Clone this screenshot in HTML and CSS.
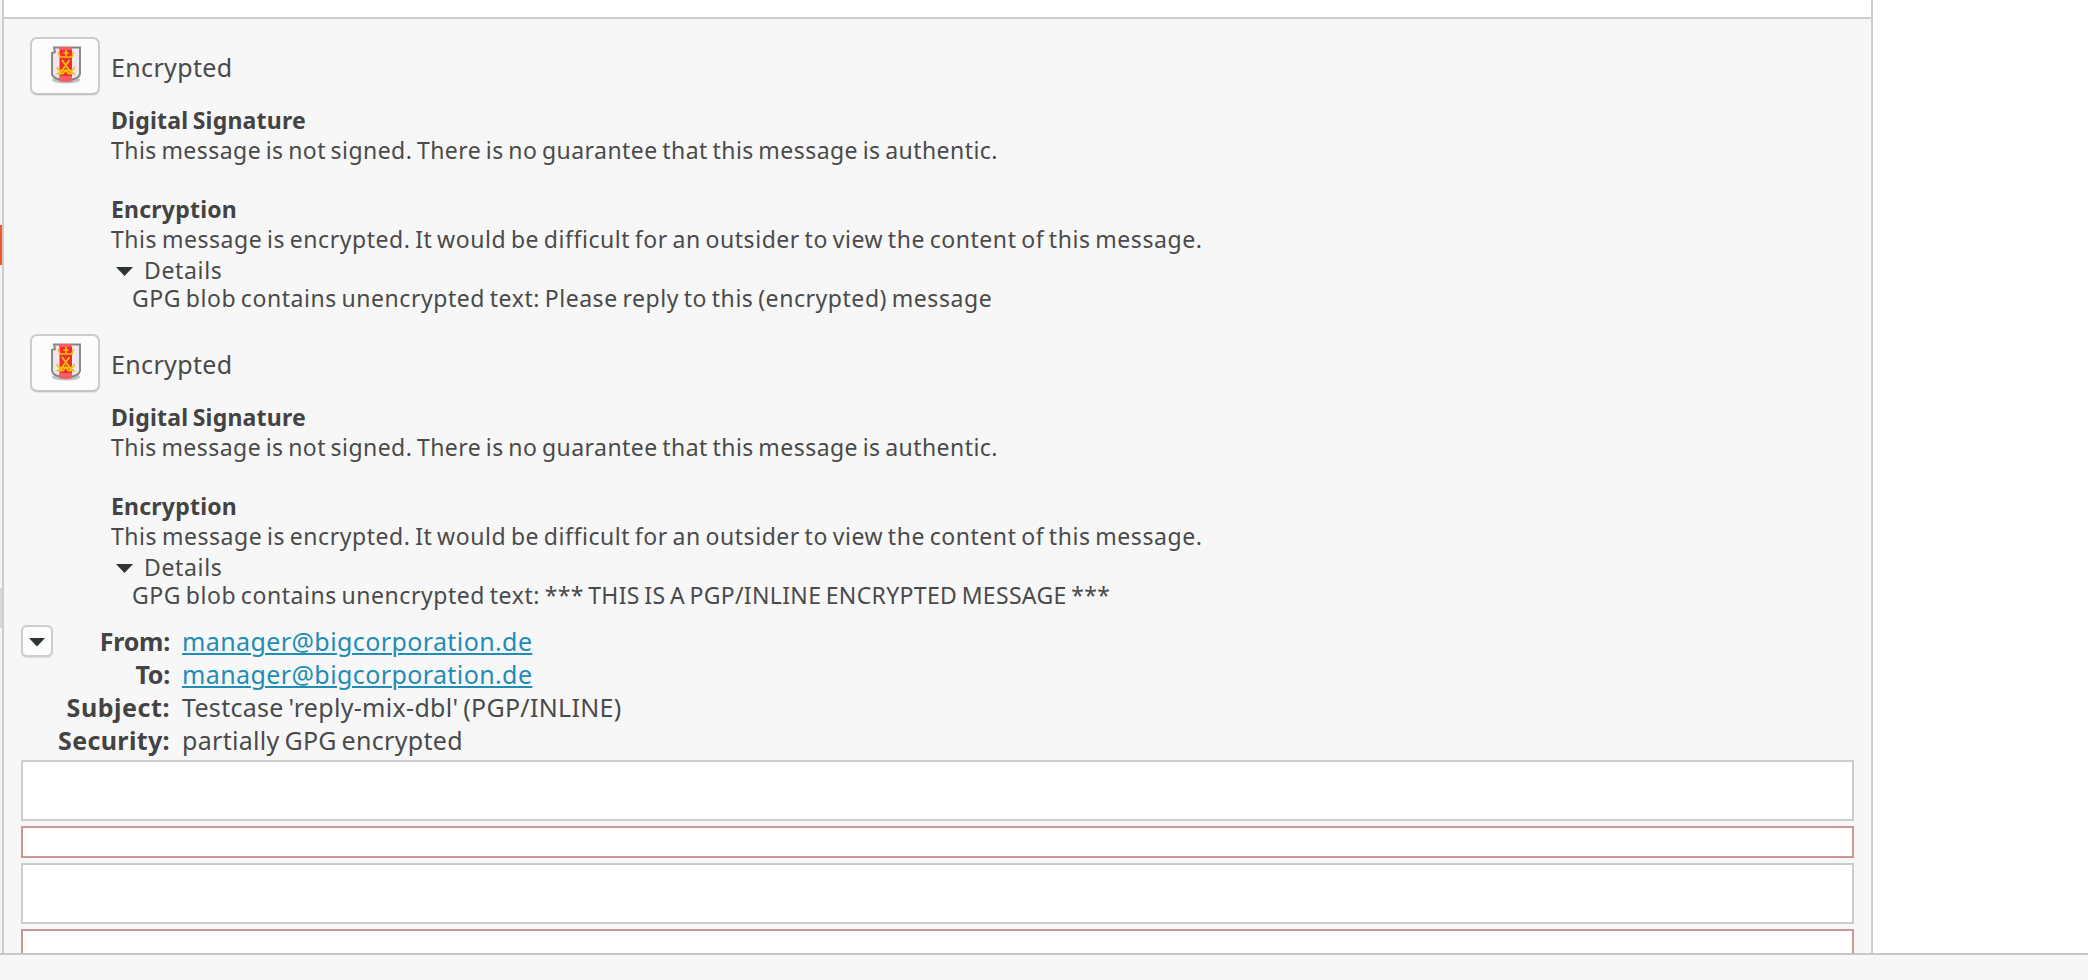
FILE: index.html
```html
<!DOCTYPE html>
<html lang="en">
<head>
<meta charset="utf-8">
<title>Message view</title>
<link rel="stylesheet" href="styles.css">
</head>
<body>
<svg class="defs" width="0" height="0" aria-hidden="true">
  <defs>
    <symbol id="shield" viewBox="0 0 34 42">
      <ellipse cx="18" cy="35" rx="14" ry="3.500" fill="#aaa" opacity=".7"/>
      <path d="M6 2.500H32V29Q31 34.500 18 35.500Q5 34.500 4 29V8L7 7Z" fill="#efe6f0" stroke="#858585" stroke-width="1.900"/>
      <path d="M11.500 2H24V36Q18 37 11.500 36Z" fill="#f42a2d"/>
      <path d="M11.500 2H24V5H11.500ZM11.500 31H24V36Q18 37 11.500 36Z" fill="#fb5c60"/>
      <path d="M10 7L12 12H24L25.500 7M18 5V11M15.500 8H20.500" fill="none" stroke="#f0c40c" stroke-width="1.700"/>
      <path d="M14 15L21.500 25.500M21.500 15L14 25.500M9 22Q10 26 14 26L10 28.500H15L17.800 25L20.500 28.500H25.500L21.500 26Q25.500 26 26.500 22" fill="none" stroke="#f0c40c" stroke-width="1.800"/>
    </symbol>
  </defs>
</svg>
<main class="workspace">
  <aside class="edge"><span class="edge-accent"></span><span class="edge-thumb"></span></aside>
  <section class="panel">
    <div class="top-strip"></div>
    <div class="content">
      <article class="card">
        <button class="seal" aria-label="Encrypted"><svg width="34" height="42"><use href="#shield"/></svg></button>
        <div class="info">
          <h2 class="title">Encrypted</h2>
          <p class="line strong">Digital Signature</p>
          <p class="line signed">This message is not signed. There is no guarantee that this message is authentic.</p>
          <p class="line strong second">Encryption</p>
          <p class="line">This message is encrypted. It would be difficult for an outsider to view the content of this message.</p>
          <p class="line details"><i class="arrow"></i>Details</p>
          <p class="line blob">GPG blob contains unencrypted text: Please reply to this (encrypted) message</p>
        </div>
      </article>
      <article class="card">
        <button class="seal" aria-label="Encrypted"><svg width="34" height="42"><use href="#shield"/></svg></button>
        <div class="info">
          <h2 class="title">Encrypted</h2>
          <p class="line strong">Digital Signature</p>
          <p class="line signed">This message is not signed. There is no guarantee that this message is authentic.</p>
          <p class="line strong second">Encryption</p>
          <p class="line">This message is encrypted. It would be difficult for an outsider to view the content of this message.</p>
          <p class="line details"><i class="arrow"></i>Details</p>
          <p class="line blob">GPG blob contains unencrypted text: <span class="caps">*** THIS IS A PGP/INLINE ENCRYPTED MESSAGE ***</span></p>
        </div>
      </article>
      <div class="headers">
        <button class="toggle" aria-label="Collapse headers"><i class="arrow"></i></button>
        <dl class="fields">
          <dt class="from">From:</dt><dd><a class="mail">manager@bigcorporation.de</a></dd>
          <dt class="to">To:</dt><dd><a class="mail">manager@bigcorporation.de</a></dd>
          <dt class="subject">Subject:</dt><dd>Testcase 'reply-mix-dbl' (PGP/INLINE)</dd>
          <dt class="security">Security:</dt><dd>partially GPG encrypted</dd>
        </dl>
      </div>
      <div class="parts">
        <div class="part"></div>
        <div class="part alert"></div>
        <div class="part"></div>
        <div class="part alert"></div>
      </div>
    </div>
  </section>
</main>
<footer class="status"></footer>
</body>
</html>
```
FILE: styles.css
```css
* { box-sizing: border-box; }
body {
  margin: 0;
  height: 980px;
  overflow: hidden;
  display: flex;
  flex-direction: column;
  background: #fff;
  color: #4a4a4a;
  font-family: "Noto Sans", sans-serif;
}
.defs { position: absolute; }
h2, p, dl, dd { margin: 0; font-weight: 400; }
button { padding: 0; font: inherit; }
.workspace { display: flex; height: 953px; }
.edge { width: 2px; display: flex; flex-direction: column; background: #f4f4f4; }
.edge-accent { height: 40px; margin-top: 225px; background: #f4582a; }
.edge-thumb { height: 40px; margin-top: 323px; background: #d8d8d8; }
.panel {
  width: 1871px;
  display: flex;
  flex-direction: column;
  overflow: hidden;
  border-left: 2px solid #cdcdcd;
  border-right: 2px solid #cdcdcd;
  background: #f7f7f7;
}
.top-strip { flex: none; height: 19px; background: #fff; border-bottom: 2px solid #cdcdcd; }
.content { padding: 18px 17px 0 17px; }
.card { display: flex; gap: 11px; height: 276px; margin: 0 0 21px 9px; }
.seal {
  flex: none;
  width: 70px;
  height: 58px;
  display: flex;
  align-items: center;
  justify-content: center;
  border: 2px solid #cdcdcd;
  border-bottom-color: #c4c4c4;
  border-radius: 7px;
  background: #fcfcfc;
  box-shadow: 0 1px 1px #e4e4e4;
}
.title { height: 68px; font-size: 25px; line-height: 60px; letter-spacing: .35px; white-space: nowrap; }
.line { font-size: 23px; line-height: 30px; letter-spacing: .55px; word-spacing: -1.8px; white-space: nowrap; }
.signed { letter-spacing: .45px; }
.strong { font-weight: 700; letter-spacing: .22px; color: #434343; }
.second { margin-top: 29px; }
.details { display: flex; align-items: center; gap: 11px; padding-left: 5px; margin-top: 1px; letter-spacing: .65px; }
.arrow {
  width: 17px;
  height: 9px;
  background: #2e3436;
  clip-path: polygon(0 0, 100% 0, 50% 100%);
}
.details .arrow { margin-top: 3px; }
.blob { padding-left: 21px; line-height: 27px; }
.caps { letter-spacing: .33px; }
.headers { display: flex; margin-top: -6px; }
.toggle {
  width: 32px;
  height: 32px;
  display: flex;
  align-items: center;
  justify-content: center;
  border: 2px solid #cdcdcd;
  border-radius: 6px;
  background: #fcfcfc;
  box-shadow: 0 1px 1px #ddd;
}
.toggle .arrow { margin-top: 2px; }
.fields {
  display: grid;
  grid-template-columns: 117px auto;
  grid-auto-rows: 33px;
  column-gap: 12px;
  font-size: 25px;
  line-height: 33px;
  letter-spacing: .3px;
  word-spacing: -2px;
  white-space: nowrap;
}
dt { font-weight: 700; color: #434343; text-align: right; }
.from, .to { letter-spacing: -.25px; }
.subject { letter-spacing: .55px; }
.security { letter-spacing: .37px; }
.mail { letter-spacing: .4px; }
a { color: #1f8db5; text-decoration: underline; text-decoration-thickness: 2px; text-underline-offset: 2px; }
.parts { display: flex; flex-direction: column; gap: 5.3px; margin-top: 2.5px; }
.part { height: 61px; border: 2px solid #cdcdcd; background: #fff; }
.alert { height: 32px; border-color: #cd9696; }
.status { flex: 1; border-top: 2px solid #c8c8c8; background: #f7f7f7; }
```
